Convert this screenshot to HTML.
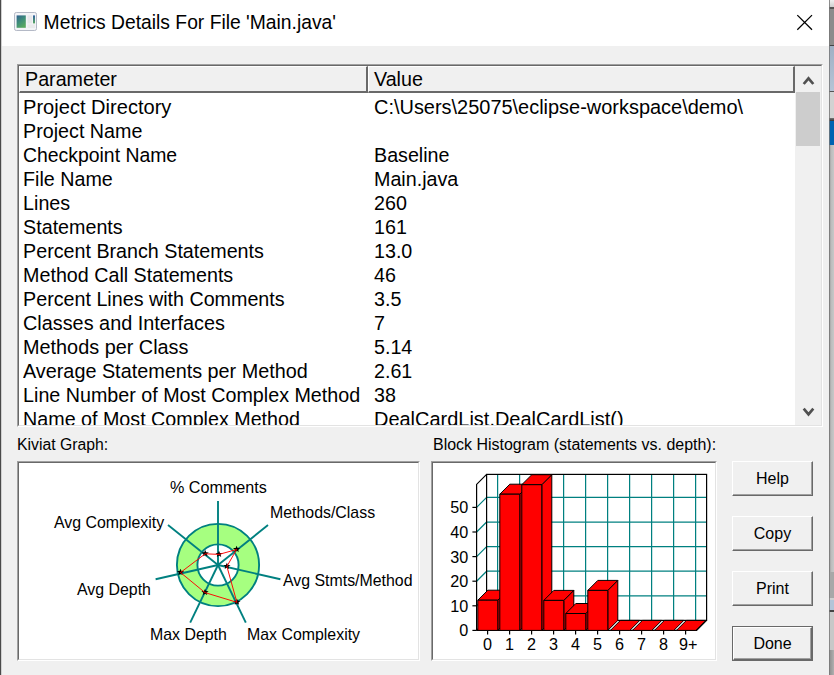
<!DOCTYPE html>
<html><head><meta charset="utf-8"><title>Metrics Details</title>
<style>
html,body{margin:0;padding:0;}
body{width:834px;height:675px;overflow:hidden;position:relative;background:#f0f0f0;font-family:"Liberation Sans",Arial,sans-serif;color:#000;}
.abs{position:absolute;}
#bgl{left:0;top:0;width:2px;height:675px;background:linear-gradient(90deg,#4a4a4a 0,#4a4a4a 1px,#d0d0d0 1px,#d0d0d0 2px);}
#bgr{left:829px;top:0;width:5px;height:675px;background:#bdbdbd;}
#bgr div{position:absolute;left:0;width:5px;}
#title{left:2px;top:0;width:827px;height:46px;background:#fff;}
#ttext{left:41.6px;top:10.4px;transform:translateY(0.6px);font-size:19.3px;line-height:24px;white-space:nowrap;}
#list{left:17px;top:64px;width:804px;height:361px;background:#fff;border:1px solid #a0a0a0;border-right-color:#fff;border-bottom-color:#fff;}
#listin{left:0;top:0;right:0;bottom:0;border:1px solid #696969;border-right-color:#e3e3e3;border-bottom-color:#e3e3e3;overflow:hidden;}
#hdr{left:0;top:0;width:776px;height:27px;background:#f0f0f0;}
.hc{position:absolute;top:0;height:24px;border-top:1px solid #fff;border-left:1px solid #fff;border-right:2px solid #696969;border-bottom:2px solid #696969;box-sizing:content-box;font-size:19.7px;line-height:25.4px;}
#rows{left:0;top:27px;width:776px;height:340px;}
.row{position:absolute;left:0;height:24px;width:776px;font-size:19.7px;line-height:24px;white-space:nowrap;}
.c1{position:absolute;left:4.1px;transform-origin:0 0;}
.c2{position:absolute;left:355px;transform-origin:0 0;}
#sb{left:776px;top:0;width:26px;height:359px;background:#f0f0f0;}
#thumb{left:1px;top:26px;width:24px;height:54px;background:#cdcdcd;}
.lbl{font-size:16px;line-height:18px;white-space:nowrap;transform-origin:0 0;}
.panel{background:#fff;border:1px solid #a0a0a0;border-right-color:#fff;border-bottom-color:#fff;box-sizing:border-box;}
.panel i{position:absolute;left:0;top:0;right:0;bottom:0;border:1px solid #696969;border-right-color:#e3e3e3;border-bottom-color:#e3e3e3;}
.btn{left:732px;width:81px;height:35px;box-sizing:border-box;background:#f0f0f0;border:1px solid #fff;border-right-color:#696969;border-bottom-color:#696969;font-size:16px;text-align:center;line-height:33.6px;}
.btn i{position:absolute;left:0;top:0;right:0;bottom:0;border:0 solid #f0f0f0;border-width:0 1px 1px 0;border-right-color:#a0a0a0;border-bottom-color:#a0a0a0;}
.btn span{position:relative;font-style:normal;}
#done{border-color:#696969;}
#done i{border:1px solid #fff;border-right:1px solid #696969;border-bottom:1px solid #696969;}
#done b{position:absolute;right:1px;bottom:1px;left:1px;top:1px;border:0 solid #a0a0a0;border-width:0 1px 1px 0;}
svg{position:absolute;left:0;top:0;}
svg text{font-family:"Liberation Sans",Arial,sans-serif;}
</style></head><body>
<div class="abs" id="bgl"></div>
<div class="abs" id="bgr">
<div style="top:0;height:7.4px;background:linear-gradient(#f0f0f0,#cfcfcf)"></div>
<div style="top:7.4px;height:1.2px;background:#555"></div>
<div style="top:8.6px;height:36.4px;background:#8c8c8c"></div>
<div style="top:45px;height:1px;background:#444"></div>
<div style="top:46px;height:44.5px;background:linear-gradient(#9fb0c4,#b6c4d6)"></div>
<div style="top:90.5px;height:1.5px;background:#555"></div>
<div style="top:92px;height:26px;background:#d2d2d2"></div>
<div style="top:118px;height:2.6px;background:linear-gradient(#777,#333)"></div>
<div style="top:120.6px;height:24.4px;background:#0063b1"></div>
<div style="top:145px;height:427px;background:linear-gradient(90deg,#959595 0,#bcbcbc 45%,#c8c8c8 100%)"></div>
<div style="top:572px;height:26px;background:#a8a8a8"></div>
<div style="top:598px;height:2px;background:#d0d0d0"></div>
<div style="top:600px;height:10px;background:#b4c4d8"></div>
<div style="top:610px;height:1.5px;background:#444"></div>
<div style="top:611.5px;height:39px;background:#c8c8c8"></div>
<div style="top:650px;height:25px;background:linear-gradient(90deg,#8c8c8c,#b0b0b0)"></div>
<div style="top:0;height:675px;width:1px;background:#777;opacity:.8"></div>
</div>
<div class="abs" id="title">
<div class="abs" id="ttext">Metrics Details For File 'Main.java'</div>
</div>
<div class="abs" id="list"><div class="abs" id="listin">
<div class="abs" id="hdr">
<div class="hc" style="left:0;width:346px;"><span style="position:absolute;left:5px;">Parameter</span></div>
<div class="hc" style="left:349px;width:424px;"><span style="position:absolute;left:5px;">Value</span></div>
</div>
<div class="abs" id="rows">
<div class="row" style="top:2.4px"><span class="c1" style="transform:scaleX(1.02)">Project Directory</span><span class="c2" style="transform:scaleX(1.013)">C:\Users\25075\eclipse-workspace\demo\</span></div>
<div class="row" style="top:26.4px"><span class="c1">Project Name</span><span class="c2"></span></div>
<div class="row" style="top:50.4px"><span class="c1" style="transform:scaleX(0.985)">Checkpoint Name</span><span class="c2">Baseline</span></div>
<div class="row" style="top:74.4px"><span class="c1">File Name</span><span class="c2">Main.java</span></div>
<div class="row" style="top:98.4px"><span class="c1">Lines</span><span class="c2">260</span></div>
<div class="row" style="top:122.4px"><span class="c1">Statements</span><span class="c2">161</span></div>
<div class="row" style="top:146.4px"><span class="c1">Percent Branch Statements</span><span class="c2">13.0</span></div>
<div class="row" style="top:170.4px"><span class="c1">Method Call Statements</span><span class="c2">46</span></div>
<div class="row" style="top:194.4px"><span class="c1">Percent Lines with Comments</span><span class="c2">3.5</span></div>
<div class="row" style="top:218.4px"><span class="c1" style="transform:scaleX(1.008)">Classes and Interfaces</span><span class="c2">7</span></div>
<div class="row" style="top:242.4px"><span class="c1" style="transform:scaleX(1.008)">Methods per Class</span><span class="c2">5.14</span></div>
<div class="row" style="top:266.4px"><span class="c1" style="transform:scaleX(1.006)">Average Statements per Method</span><span class="c2">2.61</span></div>
<div class="row" style="top:290.4px"><span class="c1">Line Number of Most Complex Method</span><span class="c2">38</span></div>
<div class="row" style="top:314.4px"><span class="c1">Name of Most Complex Method</span><span class="c2" style="transform:scaleX(1.014)">DealCardList.DealCardList()</span></div>
</div>
<div class="abs" id="sb"><div class="abs" id="thumb"></div></div>
</div></div>
<div class="abs lbl" style="left:16.8px;top:435.6px;transform:scaleX(0.985);">Kiviat Graph:</div>
<div class="abs lbl" style="left:432.8px;top:435.6px;transform:scaleX(0.998);">Block Histogram (statements vs. depth):</div>
<div class="abs panel" style="left:17px;top:461px;width:403px;height:200px;"><i></i></div>
<div class="abs panel" style="left:431px;top:461px;width:286px;height:200px;"><i></i></div>
<div class="abs btn" style="top:461px;"><i></i><span>Help</span></div>
<div class="abs btn" style="top:516px;"><i></i><span>Copy</span></div>
<div class="abs btn" style="top:571px;"><i></i><span>Print</span></div>
<div class="abs btn" id="done" style="top:626px;"><i></i><b></b><span>Done</span></div>
<svg width="834" height="675" viewBox="0 0 834 675">
<!-- title icon -->
<defs><linearGradient id="tg" x1="0" y1="0" x2="0.6" y2="1"><stop offset="0" stop-color="#2f5f8f"/><stop offset="0.55" stop-color="#3f8f78"/><stop offset="1" stop-color="#58a860"/></linearGradient>
<linearGradient id="tg2" x1="0" y1="0" x2="0" y2="1"><stop offset="0" stop-color="#2f5fa0"/><stop offset="1" stop-color="#58a860"/></linearGradient></defs>
<g id="ticon"><rect x="14.5" y="12.5" width="22" height="18" rx="1.8" fill="#f3f4f7" stroke="#b4b9c6" stroke-width="1"/>
<rect x="16.6" y="15.4" width="9.2" height="12.4" fill="url(#tg)"/>
<rect x="27.5" y="15.4" width="4.5" height="8" fill="#e6e7ea"/>
<rect x="27.5" y="24.4" width="7.5" height="3.6" fill="#e9eaec"/>
<rect x="33" y="15.4" width="2" height="8" fill="url(#tg2)"/></g>
<!-- close -->
<path d="M797.3 15.1L812 29.8M812 15.1L797.3 29.8" stroke="#000" stroke-width="1.25" fill="none"/>
<!-- scroll arrows -->
<path d="M803.7 84L808.5 78.3L813.3 84" stroke="#505050" stroke-width="2.7" fill="none"/>
<path d="M803.7 408.7L808.5 414.4L813.3 408.7" stroke="#505050" stroke-width="2.7" fill="none"/>

<circle cx="218.0" cy="565.0" r="41.1" fill="#a6ff80" stroke="#008080" stroke-width="1.9"/>
<circle cx="218.0" cy="565.0" r="20.6" fill="#fff" stroke="#008080" stroke-width="1.9"/>
<g stroke="#008080" stroke-width="1.9"><line x1="218.0" y1="565.0" x2="218.0" y2="501.0"/><line x1="218.0" y1="565.0" x2="268.0" y2="525.1"/><line x1="218.0" y1="565.0" x2="280.4" y2="579.2"/><line x1="218.0" y1="565.0" x2="245.8" y2="622.7"/><line x1="218.0" y1="565.0" x2="190.2" y2="622.7"/><line x1="218.0" y1="565.0" x2="155.6" y2="579.2"/><line x1="218.0" y1="565.0" x2="168.0" y2="525.1"/></g>
<polygon points="219.0,550.7 220.0,552.9 222.6,553.0 220.6,554.6 221.2,556.9 219.0,555.6 216.8,556.9 217.4,554.6 215.4,553.0 218.0,552.9" fill="#000"/><polygon points="236.6,545.8 237.6,548.0 240.2,548.1 238.2,549.7 238.8,552.0 236.6,550.7 234.4,552.0 235.0,549.7 233.0,548.1 235.6,548.0" fill="#000"/><polygon points="226.9,562.7 227.9,564.9 230.5,565.0 228.5,566.6 229.1,568.9 226.9,567.6 224.7,568.9 225.3,566.6 223.3,565.0 225.9,564.9" fill="#000"/><polygon points="236.9,598.6 237.9,600.8 240.5,600.9 238.5,602.5 239.1,604.8 236.9,603.5 234.7,604.8 235.3,602.5 233.3,600.9 235.9,600.8" fill="#000"/><polygon points="205.0,588.9 206.0,591.1 208.6,591.2 206.6,592.8 207.2,595.1 205.0,593.8 202.8,595.1 203.4,592.8 201.4,591.2 204.0,591.1" fill="#000"/><polygon points="180.5,568.8 181.5,571.0 184.1,571.1 182.1,572.7 182.7,575.0 180.5,573.7 178.3,575.0 178.9,572.7 176.9,571.1 179.5,571.0" fill="#000"/><polygon points="205.2,550.1 206.2,552.3 208.8,552.4 206.8,554.0 207.4,556.3 205.2,555.0 203.0,556.3 203.6,554.0 201.6,552.4 204.2,552.3" fill="#000"/>
<polygon points="219.0,554.4 236.6,549.5 226.9,566.4 236.9,602.3 205.0,592.6 180.5,572.5 205.2,553.8" fill="none" stroke="#ff0000" stroke-width="0.95"/>
<g font-size="15.9px" fill="#000"><text x="170" y="493" font-size="16.15px">% Comments</text><text x="270" y="518">Methods/Class</text><text x="283" y="586">Avg Stmts/Method</text><text x="247" y="640">Max Complexity</text><text x="150" y="640">Max Depth</text><text x="77" y="595">Avg Depth</text><text x="54" y="528">Avg Complexity</text></g>

<rect x="486.6" y="474.4" width="220.0" height="146.0" fill="#fff" stroke="none"/><g stroke="#008080" stroke-width="1.25"><line x1="497.6" y1="474.4" x2="497.6" y2="620.4"/><line x1="519.6" y1="474.4" x2="519.6" y2="620.4"/><line x1="541.6" y1="474.4" x2="541.6" y2="620.4"/><line x1="563.6" y1="474.4" x2="563.6" y2="620.4"/><line x1="585.6" y1="474.4" x2="585.6" y2="620.4"/><line x1="607.6" y1="474.4" x2="607.6" y2="620.4"/><line x1="629.6" y1="474.4" x2="629.6" y2="620.4"/><line x1="651.6" y1="474.4" x2="651.6" y2="620.4"/><line x1="673.6" y1="474.4" x2="673.6" y2="620.4"/><line x1="695.6" y1="474.4" x2="695.6" y2="620.4"/><line x1="486.6" y1="595.8" x2="706.6" y2="595.8"/><line x1="476.6" y1="605.8" x2="486.6" y2="595.8"/><line x1="486.6" y1="571.2" x2="706.6" y2="571.2"/><line x1="476.6" y1="581.2" x2="486.6" y2="571.2"/><line x1="486.6" y1="546.6" x2="706.6" y2="546.6"/><line x1="476.6" y1="556.6" x2="486.6" y2="546.6"/><line x1="486.6" y1="522.0" x2="706.6" y2="522.0"/><line x1="476.6" y1="532.0" x2="486.6" y2="522.0"/><line x1="486.6" y1="497.4" x2="706.6" y2="497.4"/><line x1="476.6" y1="507.4" x2="486.6" y2="497.4"/></g><g stroke="#000" stroke-width="1.2" fill="none"><rect x="486.6" y="474.4" width="220.0" height="146.0"/><path d="M476.6 630.4V484.4L486.6 474.4"/><path d="M476.6 630.4H696.6L706.6 620.4"/><path d="M476.6 630.4L486.6 620.4"/><line x1="472.4" y1="630.4" x2="476.6" y2="630.4"/><line x1="472.4" y1="605.8" x2="476.6" y2="605.8"/><line x1="472.4" y1="581.2" x2="476.6" y2="581.2"/><line x1="472.4" y1="556.6" x2="476.6" y2="556.6"/><line x1="472.4" y1="532.0" x2="476.6" y2="532.0"/><line x1="472.4" y1="507.4" x2="476.6" y2="507.4"/><line x1="487.6" y1="630.4" x2="487.6" y2="634.4"/><line x1="509.6" y1="630.4" x2="509.6" y2="634.4"/><line x1="531.6" y1="630.4" x2="531.6" y2="634.4"/><line x1="553.6" y1="630.4" x2="553.6" y2="634.4"/><line x1="575.6" y1="630.4" x2="575.6" y2="634.4"/><line x1="597.6" y1="630.4" x2="597.6" y2="634.4"/><line x1="619.6" y1="630.4" x2="619.6" y2="634.4"/><line x1="641.6" y1="630.4" x2="641.6" y2="634.4"/><line x1="663.6" y1="630.4" x2="663.6" y2="634.4"/><line x1="685.6" y1="630.4" x2="685.6" y2="634.4"/></g><g fill="#ff0000" stroke="#000" stroke-width="1" stroke-linejoin="round"><polygon points="497.8,630.4 507.8,620.4 507.8,590.2 507.8,590.2 497.8,600.2"/><polygon points="477.8,600.2 487.8,590.2 507.8,590.2 497.8,600.2"/><rect x="477.8" y="600.2" width="20.0" height="30.2"/><polygon points="519.8,630.4 529.8,620.4 529.8,484.2 529.8,484.2 519.8,494.2"/><polygon points="499.8,494.2 509.8,484.2 529.8,484.2 519.8,494.2"/><rect x="499.8" y="494.2" width="20.0" height="136.2"/><polygon points="541.8,630.4 551.8,620.4 551.8,474.7 551.8,474.7 541.8,484.7"/><polygon points="521.8,484.7 531.8,474.7 551.8,474.7 541.8,484.7"/><rect x="521.8" y="484.7" width="20.0" height="145.7"/><polygon points="563.8,630.4 573.8,620.4 573.8,590.4 573.8,590.4 563.8,600.4"/><polygon points="543.8,600.4 553.8,590.4 573.8,590.4 563.8,600.4"/><rect x="543.8" y="600.4" width="20.0" height="30.0"/><polygon points="585.8,630.4 595.8,620.4 595.8,603.5 595.8,603.5 585.8,613.5"/><polygon points="565.8,613.5 575.8,603.5 595.8,603.5 585.8,613.5"/><rect x="565.8" y="613.5" width="20.0" height="16.9"/><polygon points="607.8,630.4 617.8,620.4 617.8,580.4 617.8,580.4 607.8,590.4"/><polygon points="587.8,590.4 597.8,580.4 617.8,580.4 607.8,590.4"/><rect x="587.8" y="590.4" width="20.0" height="40.0"/><polygon points="610.4,630.4 620.4,620.4 639.8,620.4 629.8,630.4"/><polygon points="632.4,630.4 642.4,620.4 661.8,620.4 651.8,630.4"/><polygon points="654.4,630.4 664.4,620.4 683.8,620.4 673.8,630.4"/><polygon points="676.4,630.4 686.4,620.4 705.8,620.4 695.8,630.4"/></g><g font-size="16.2px" fill="#000"><text x="468.2" y="636.3" text-anchor="end">0</text><text x="468.2" y="611.7" text-anchor="end">10</text><text x="468.2" y="587.1" text-anchor="end">20</text><text x="468.2" y="562.5" text-anchor="end">30</text><text x="468.2" y="537.9" text-anchor="end">40</text><text x="468.2" y="513.3" text-anchor="end">50</text><text x="487.6" y="649.6" text-anchor="middle">0</text><text x="509.6" y="649.6" text-anchor="middle">1</text><text x="531.6" y="649.6" text-anchor="middle">2</text><text x="553.6" y="649.6" text-anchor="middle">3</text><text x="575.6" y="649.6" text-anchor="middle">4</text><text x="597.6" y="649.6" text-anchor="middle">5</text><text x="619.6" y="649.6" text-anchor="middle">6</text><text x="641.6" y="649.6" text-anchor="middle">7</text><text x="663.6" y="649.6" text-anchor="middle">8</text><text x="679.1" y="649.6" text-anchor="start">9+</text></g>
</svg>
</body></html>
